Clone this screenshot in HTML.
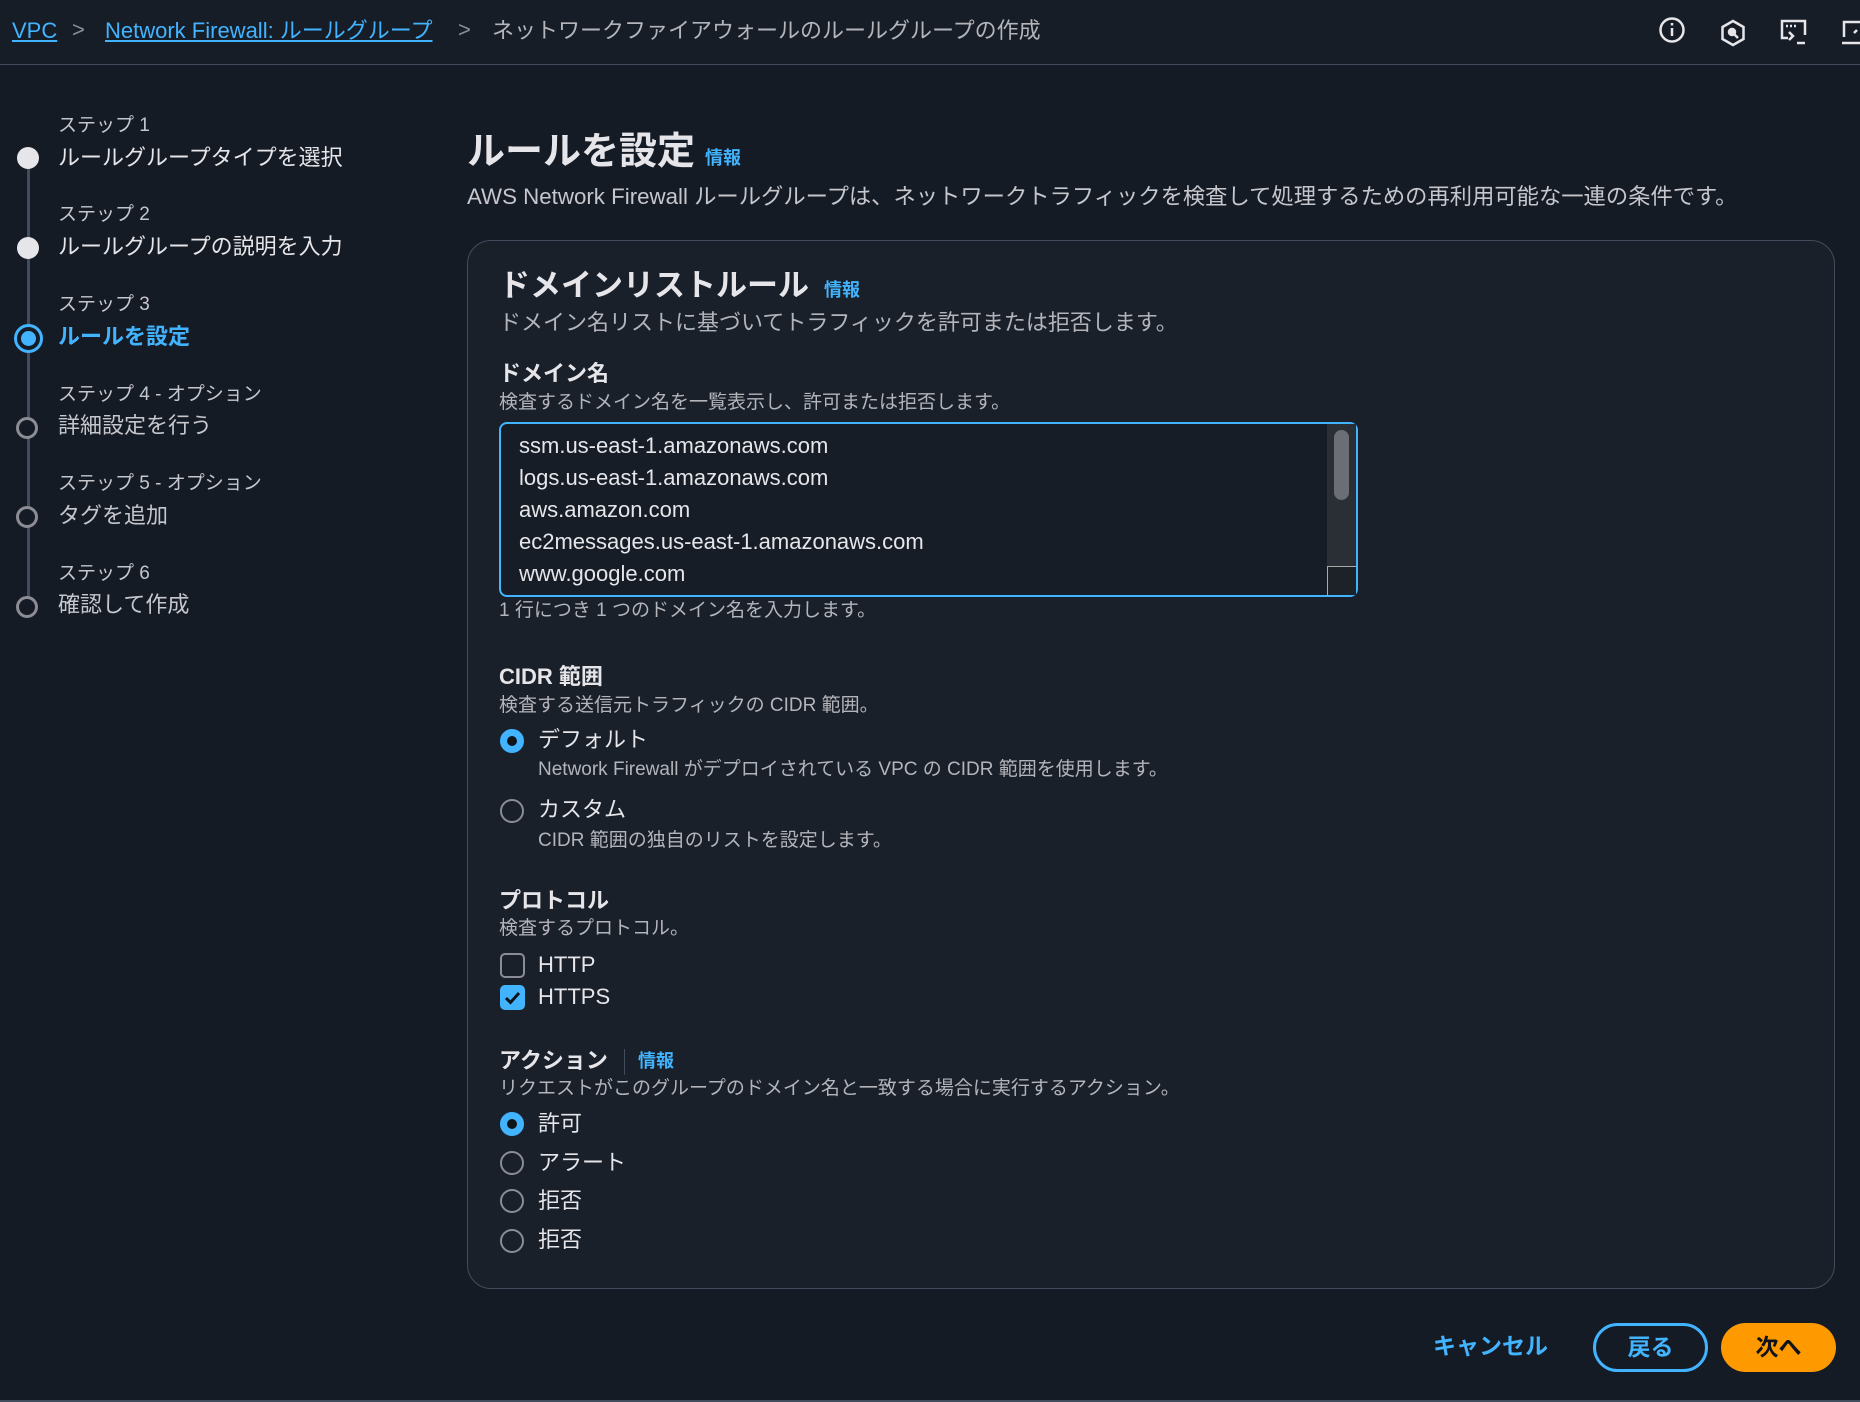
<!DOCTYPE html>
<html><head><meta charset="utf-8"><style>
*{margin:0;padding:0;box-sizing:border-box}
body{width:1860px;height:1402px;background:#151b24;font-family:"Liberation Sans","Noto Sans CJK JP",sans-serif;color:#dedee3;position:relative;overflow:hidden}
.a{position:absolute;white-space:nowrap;line-height:1}
.blue{color:#42b4ff}
.top{position:absolute;left:0;top:0;width:1860px;height:65px;border-bottom:1px solid #414d5c;background:#161d26}
.sl{font-size:19px;color:#c6c6cd}
.st{font-size:22px;color:#e6e6ea}
.dot{position:absolute;width:22px;height:22px;border-radius:50%}
.card{position:absolute;left:467px;top:240px;width:1368px;height:1049px;border:1px solid #414d5c;border-radius:24px;background:#19202a}
.h{font-size:22px;font-weight:bold;color:#e6e6ea}
.d{font-size:19px;color:#b4b4bb}
.o{font-size:22px;color:#e6e6ea}
.r{position:absolute;width:24px;height:24px;border-radius:50%;border:2px solid #8c8c94}
.rs{border:7px solid #42b4ff;background:#0f141a}
.ta{position:absolute;left:499px;top:422px;width:859px;height:175px;border:2px solid #42b4ff;border-radius:8px;background:#161d26}
.tl{font-size:22px;color:#e6e6ea;left:519px}
</style></head><body>
<div class="top"></div>
<div class="a blue" style="left:12px;top:20px;font-size:22px;text-decoration:underline">VPC</div>
<div class="a" style="left:72px;top:19px;font-size:22px;color:#8c8c94">&gt;</div>
<div class="a blue" style="left:105px;top:20px;font-size:22px;text-decoration:underline">Network Firewall: ルールグループ</div>
<div class="a" style="left:458px;top:19px;font-size:22px;color:#8c8c94">&gt;</div>
<div class="a" style="left:492px;top:20px;font-size:22px;color:#b4b4bb">ネットワークファイアウォールのルールグループの作成</div>
<svg class="a" style="left:1658px;top:16px" width="28" height="28" viewBox="0 0 28 28" fill="none" stroke="#e6e6ea" stroke-width="2.5"><circle cx="14" cy="14" r="11.5"/><path d="M14 12v8M14 7v2.5"/></svg>
<svg class="a" style="left:1719px;top:19px" width="28" height="28" viewBox="0 0 28 28" fill="none" stroke="#e6e6ea" stroke-width="2.5"><path d="M14 2l10.5 6v12L14 26 3.5 20V8z"/><circle cx="13" cy="13" r="3" fill="#e6e6ea"/><path d="M15 15l4 4"/></svg>
<svg class="a" style="left:1780px;top:19px" width="28" height="26" viewBox="0 0 28 26" fill="none" stroke="#e6e6ea" stroke-width="2.5"><path d="M8 19H2V2h23v14"/><path d="M6 7h2M10 7h2M14 7h2M9 13l4 4-4 4M17 24h8"/></svg>
<svg class="a" style="left:1842px;top:19px" width="18" height="26" viewBox="0 0 18 26" fill="none" stroke="#e6e6ea" stroke-width="2.5"><path d="M2 18V3h16M0 24h18M12 14l3-3"/></svg>

<div style="position:absolute;left:27px;top:160px;width:3px;height:445px;background:#414d5c"></div>
<div class="a sl" style="left:58px;top:116px">ステップ 1</div>
<div class="a st" style="left:58px;top:147px">ルールグループタイプを選択</div>
<div class="dot" style="left:17px;top:147px;background:#e6e6ea"></div>
<div class="a sl" style="left:58px;top:205px">ステップ 2</div>
<div class="a st" style="left:58px;top:236px">ルールグループの説明を入力</div>
<div class="dot" style="left:17px;top:237px;background:#e6e6ea"></div>
<div class="a sl" style="left:58px;top:295px">ステップ 3</div>
<div class="a st" style="left:58px;top:326px;color:#42b4ff;font-weight:bold">ルールを設定</div>
<div class="dot" style="left:14px;top:324px;width:29px;height:29px;border:3px solid #42b4ff;background:#151b24"></div>
<div class="dot" style="left:21px;top:331px;width:15px;height:15px;background:#42b4ff"></div>
<div class="a sl" style="left:58px;top:385px">ステップ 4 - オプション</div>
<div class="a st" style="left:58px;top:415px;color:#c6c6cd">詳細設定を行う</div>
<div class="dot" style="left:16px;top:417px;border:3px solid #8c8c94;background:#151b24"></div>
<div class="a sl" style="left:58px;top:474px">ステップ 5 - オプション</div>
<div class="a st" style="left:58px;top:505px;color:#c6c6cd">タグを追加</div>
<div class="dot" style="left:16px;top:506px;border:3px solid #8c8c94;background:#151b24"></div>
<div class="a sl" style="left:58px;top:564px">ステップ 6</div>
<div class="a st" style="left:58px;top:594px;color:#c6c6cd">確認して作成</div>
<div class="dot" style="left:16px;top:596px;border:3px solid #8c8c94;background:#151b24"></div>

<div class="a" style="left:467px;top:133px;font-size:38px;font-weight:bold;color:#e6e6ea">ルールを設定</div>
<div class="a blue" style="left:705px;top:149px;font-size:18px;font-weight:bold">情報</div>
<div class="a" style="left:467px;top:186px;font-size:22.3px;color:#c6c6cd">AWS Network Firewall ルールグループは、ネットワークトラフィックを検査して処理するための再利用可能な一連の条件です。</div>

<div class="card"></div>
<div class="a" style="left:499px;top:270px;font-size:31px;font-weight:bold;color:#e6e6ea">ドメインリストルール</div>
<div class="a blue" style="left:824px;top:281px;font-size:18px;font-weight:bold">情報</div>
<div class="a" style="left:499px;top:312px;font-size:22px;color:#b4b4bb">ドメイン名リストに基づいてトラフィックを許可または拒否します。</div>
<div class="a h" style="left:499px;top:363px">ドメイン名</div>
<div class="a d" style="left:499px;top:393px">検査するドメイン名を一覧表示し、許可または拒否します。</div>
<div class="ta"></div>
<div style="position:absolute;left:1327px;top:424px;width:29px;height:171px;background:#2a2f36"></div>
<div style="position:absolute;left:1334px;top:430px;width:15px;height:70px;border-radius:8px;background:#6b6e74"></div>
<div style="position:absolute;left:1327px;top:566px;width:29px;height:29px;border:1px solid #aaa;border-right:none;border-bottom:none;background:#1d2228"></div>
<div class="a tl" style="top:435px">ssm.us-east-1.amazonaws.com</div>
<div class="a tl" style="top:467px">logs.us-east-1.amazonaws.com</div>
<div class="a tl" style="top:499px">aws.amazon.com</div>
<div class="a tl" style="top:531px">ec2messages.us-east-1.amazonaws.com</div>
<div class="a tl" style="top:563px">www.google.com</div>
<div class="a d" style="left:499px;top:601px">1 行につき 1 つのドメイン名を入力します。</div>

<div class="a h" style="left:499px;top:666px">CIDR 範囲</div>
<div class="a d" style="left:499px;top:696px">検査する送信元トラフィックの CIDR 範囲。</div>
<div class="r rs" style="left:500px;top:729px"></div>
<div class="a o" style="left:538px;top:729px">デフォルト</div>
<div class="a d" style="left:538px;top:760px">Network Firewall がデプロイされている VPC の CIDR 範囲を使用します。</div>
<div class="r" style="left:500px;top:799px"></div>
<div class="a o" style="left:538px;top:799px">カスタム</div>
<div class="a d" style="left:538px;top:831px">CIDR 範囲の独自のリストを設定します。</div>

<div class="a h" style="left:499px;top:890px">プロトコル</div>
<div class="a d" style="left:499px;top:919px">検査するプロトコル。</div>
<div style="position:absolute;left:500px;top:953px;width:25px;height:25px;border:2px solid #8c8c94;border-radius:5px"></div>
<div class="a o" style="left:538px;top:954px">HTTP</div>
<div style="position:absolute;left:500px;top:985px;width:25px;height:25px;background:#42b4ff;border-radius:5px"></div>
<svg class="a" style="left:500px;top:985px" width="25" height="25" viewBox="0 0 25 25" fill="none" stroke="#0f141a" stroke-width="3"><path d="M6 13l4.5 4.5L19 8"/></svg>
<div class="a o" style="left:538px;top:986px">HTTPS</div>

<div class="a h" style="left:499px;top:1050px">アクション</div>
<div style="position:absolute;left:624px;top:1049px;width:1px;height:26px;background:#414d5c"></div>
<div class="a blue" style="left:638px;top:1052px;font-size:18px;font-weight:bold">情報</div>
<div class="a d" style="left:499px;top:1079px">リクエストがこのグループのドメイン名と一致する場合に実行するアクション。</div>
<div class="r rs" style="left:500px;top:1112px"></div>
<div class="a o" style="left:538px;top:1113px">許可</div>
<div class="r" style="left:500px;top:1151px"></div>
<div class="a o" style="left:538px;top:1152px">アラート</div>
<div class="r" style="left:500px;top:1189px"></div>
<div class="a o" style="left:538px;top:1190px">拒否</div>
<div class="r" style="left:500px;top:1229px"></div>
<div class="a o" style="left:538px;top:1229px">拒否</div>

<div class="a blue" style="left:1433px;top:1335px;font-size:23px;font-weight:bold">キャンセル</div>
<div style="position:absolute;left:1593px;top:1323px;width:115px;height:49px;border:3px solid #42b4ff;border-radius:25px;color:#42b4ff;font-size:23px;font-weight:bold;text-align:center;line-height:43px">戻る</div>
<div style="position:absolute;left:1721px;top:1323px;width:115px;height:49px;background:#ff9900;border-radius:25px;color:#0f141a;font-size:23px;font-weight:bold;text-align:center;line-height:49px">次へ</div>
<div style="position:absolute;left:0;top:1400px;width:1860px;height:2px;background:#414d5c"></div>
</body></html>
